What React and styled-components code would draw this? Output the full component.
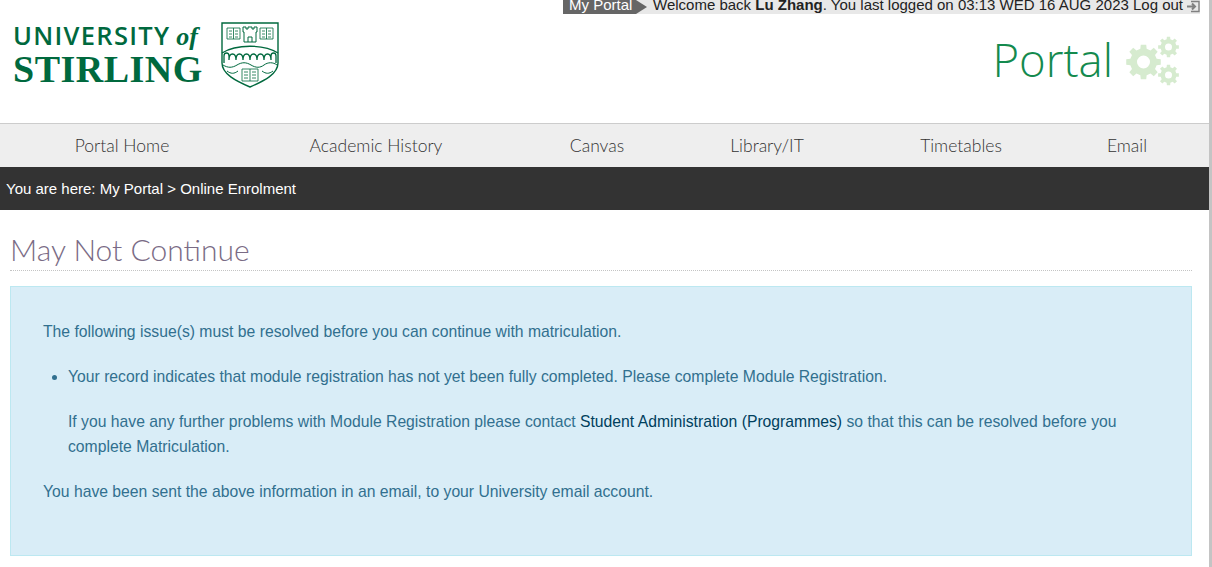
import styled, { createGlobalStyle } from 'styled-components'

const GlobalStyle = createGlobalStyle`
  html, body {
    margin: 0;
    padding: 0;
    background: #fff;
    overflow: hidden;
  }
  body {
    font-family: "Liberation Sans", Arial, sans-serif;
    font-size: 15px;
    color: #333;
  }
`

// builds one gear outline for the cogs icon
const gearPath = (cx, cy, outer, inner, hole, teeth) => {
  const pts = []
  const step = (Math.PI * 2) / teeth
  for (let i = 0; i < teeth; i++) {
    const a = i * step - Math.PI / 2
    const tip = step * 0.2
    const root = step * 0.3
    const at = (r, t) => `${(cx + r * Math.cos(t)).toFixed(2)} ${(cy + r * Math.sin(t)).toFixed(2)}`
    pts.push(at(inner, a - root), at(outer, a - tip), at(outer, a + tip), at(inner, a + root))
  }
  const ring = `M${cx - hole} ${cy}a${hole} ${hole} 0 1 0 ${hole * 2} 0a${hole} ${hole} 0 1 0 ${-hole * 2} 0z`
  return `M${pts.join('L')}z${ring}`
}

const Page = styled.div`
  width: 1209px;
  height: 567px;
  border-right: 3px solid #c4c4c4;
  overflow: hidden;
`

const TopBar = styled.div`
  display: flex;
  align-items: flex-start;
  height: 14px;
  margin: 0 9px 0 563px;
  background: #e8e8e8;
  line-height: 9px;
  white-space: nowrap;
  overflow: hidden;
`

const Crumb = styled.span`
  position: relative;
  display: block;
  flex: none;
  width: 73px;
  height: 15px;
  padding-left: 6px;
  box-sizing: border-box;
  margin-right: 17px;
  background: #666;
  color: #fff;

  &::after {
    content: '';
    position: absolute;
    left: 73px;
    top: 0;
    border-left: 11px solid #666;
    border-top: 7px solid transparent;
    border-bottom: 7px solid transparent;
  }
`

const Welcome = styled.span`
  color: #222;
`

const LogoutIcon = styled.svg`
  width: 14px;
  height: 13px;
  margin-left: 3px;
  flex: none;
`

const Header = styled.header`
  display: flex;
  justify-content: space-between;
  height: 109px;
  border-bottom: 1px solid #ccc;
`

const Brand = styled.div`
  display: flex;
  align-items: flex-start;
  padding: 7px 0 0 13px;
  color: #00693e;
`

const Wordmark = styled.div`
  width: 190px;
  margin-right: 18px;
`

const University = styled.div`
  font-family: "Open Sans", sans-serif;
  font-weight: 600;
  font-size: 25.5px;
  line-height: 28px;
  letter-spacing: 1.3px;
  word-spacing: -2px;
  white-space: nowrap;

  em {
    font-family: "Liberation Serif", serif;
    font-size: 26px;
    font-weight: 700;
    letter-spacing: 0;
  }
`

const Stirling = styled.div`
  font-family: "Liberation Serif", serif;
  font-weight: 700;
  font-size: 38px;
  line-height: 36px;
  letter-spacing: 0.5px;
  white-space: nowrap;
`

const Crest = styled.svg`
  width: 58px;
  height: 66px;
  margin-top: 1px;
`

const PortalMark = styled.div`
  display: flex;
  align-items: flex-start;
  gap: 13px;
  padding: 14px 29px 0 0;
`

const PortalWord = styled.span`
  font-family: "Open Sans", sans-serif;
  font-weight: 300;
  font-size: 45.5px;
  line-height: 62px;
  color: #148a4e;
`

const Cogs = styled.svg`
  width: 54px;
  height: 50px;
  margin-top: 8px;
  fill: #d6ebcf;
  fill-rule: evenodd;
`

const Nav = styled.nav`
  display: grid;
  grid-template-columns: 244px 264px 178px 162px 226px 106px;
  height: 43px;
  background: #eee;
  font-family: Lato, sans-serif;
  font-weight: 300;
  font-size: 17.5px;
  line-height: 43px;
  color: #333;
  text-align: center;
`

const NavLink = styled.a`
  color: inherit;
  text-decoration: none;
`

const Breadcrumb = styled.div`
  height: 43px;
  padding-left: 6px;
  background: #333;
  color: #fff;
  line-height: 43px;
`

const Content = styled.main`
  padding: 0 17px 0 10px;
`

const Title = styled.h1`
  margin: 20px 0 15px;
  padding-bottom: 2px;
  border-bottom: 1px dotted #c4c4c4;
  font-family: Lato, sans-serif;
  font-weight: 300;
  font-size: 30px;
  line-height: 38px;
  color: #7a6b85;
`

const Alert = styled.div`
  box-sizing: border-box;
  height: 270px;
  padding: 32px;
  background: #d9edf7;
  border: 1px solid #bce8f1;
  color: #31708f;
  font-size: 15.73px;
  line-height: 25px;

  p {
    margin: 0 0 20px;
  }
  ul {
    margin: 0 0 20px;
    padding-left: 25px;
  }
  a {
    color: #00405d;
    text-decoration: none;
  }
`

const App = () => {
  return (
    <Page>
      <GlobalStyle />
      <TopBar>
        <Crumb>My Portal</Crumb>
        <Welcome>
          Welcome back <b>Lu Zhang</b>. You last logged on 03:13 WED 16 AUG 2023 Log out
        </Welcome>
        <LogoutIcon viewBox="0 0 14 13" fill="none" stroke="#808080">
          <path d="M5 1.500h8v10H5" strokeWidth="1.4" />
          <path d="M1 6.500h7M6 3.500l3 3-3 3" strokeWidth="2" />
        </LogoutIcon>
      </TopBar>
      <Header>
        <Brand>
          <Wordmark>
            <University>
              UNIVERSITY <em>of</em>
            </University>
            <Stirling>STIRLING</Stirling>
          </Wordmark>
          <Crest viewBox="0 0 58 66" fill="none" stroke="#00693e" strokeWidth="1">
            <path d="M1 1h56v40c0 11-14 18-28 24C15 59 1 52 1 41z" strokeWidth="1.4" />
            <path d="M6 6h13v11H6zM39 6h13v11H39zM12.500 6v11M45.500 6v11M8 9h3M8 12h3M8 15h3M14 9h3M14 12h3M14 15h3M41 9h3M41 12h3M41 15h3M47 9h3M47 12h3M47 15h3" strokeWidth="0.8" />
            <path d="M23 20V10h-1V5h3v2h2V5h4v2h2V5h3v5h-1v10zM27 20v-5h4v5" />
            <path d="M1 31c14-9 42-9 56 0" strokeWidth="1.3" />
            <path d="M3 41v-7c0-4 5-4 5 0v4c0-8 7-8 7 0 0-8 7-8 7 0 0-8 7-8 7 0 0-8 7-8 7 0 0-8 7-8 7 0 0-8 7-8 7 0v-4c0-4 5-4 5 0v7" strokeWidth="1.3" />
            <path d="M2 43c5 3 9 3 14 0s9-3 14 0 9 3 13 0 9-3 13 0" />
            <path d="M6 49c4 3 7 3 11 0M41 49c4 3 7 3 11 0" />
            <path d="M21 47h16v12H21zM29 47v12M23 50h4M23 53h4M23 56h4M31 50h4M31 53h4M31 56h4" strokeWidth="0.8" />
          </Crest>
        </Brand>
        <PortalMark>
          <PortalWord>Portal</PortalWord>
          <Cogs viewBox="0 0 54 50">
            <path d={gearPath(17.5, 26, 17.5, 13.5, 6.5, 8)} />
            <path d={gearPath(42.5, 11, 10.5, 8, 3.5, 8)} />
            <path d={gearPath(42.5, 39, 10.5, 8, 3.5, 8)} />
          </Cogs>
        </PortalMark>
      </Header>
      <Nav>
        <NavLink>Portal Home</NavLink>
        <NavLink>Academic History</NavLink>
        <NavLink>Canvas</NavLink>
        <NavLink>Library/IT</NavLink>
        <NavLink>Timetables</NavLink>
        <NavLink>Email</NavLink>
      </Nav>
      <Breadcrumb>You are here: My Portal &gt; Online Enrolment</Breadcrumb>
      <Content>
        <Title>May Not Continue</Title>
        <Alert>
          <p>The following issue(s) must be resolved before you can continue with matriculation.</p>
          <ul>
            <li>
              <p>Your record indicates that module registration has not yet been fully completed. Please complete Module Registration.</p>
              If you have any further problems with Module Registration please contact{' '}
              <a>Student Administration (Programmes)</a> so that this can be resolved before you complete Matriculation.
            </li>
          </ul>
          <p>You have been sent the above information in an email, to your University email account.</p>
        </Alert>
      </Content>
    </Page>
  )
}

export default App
